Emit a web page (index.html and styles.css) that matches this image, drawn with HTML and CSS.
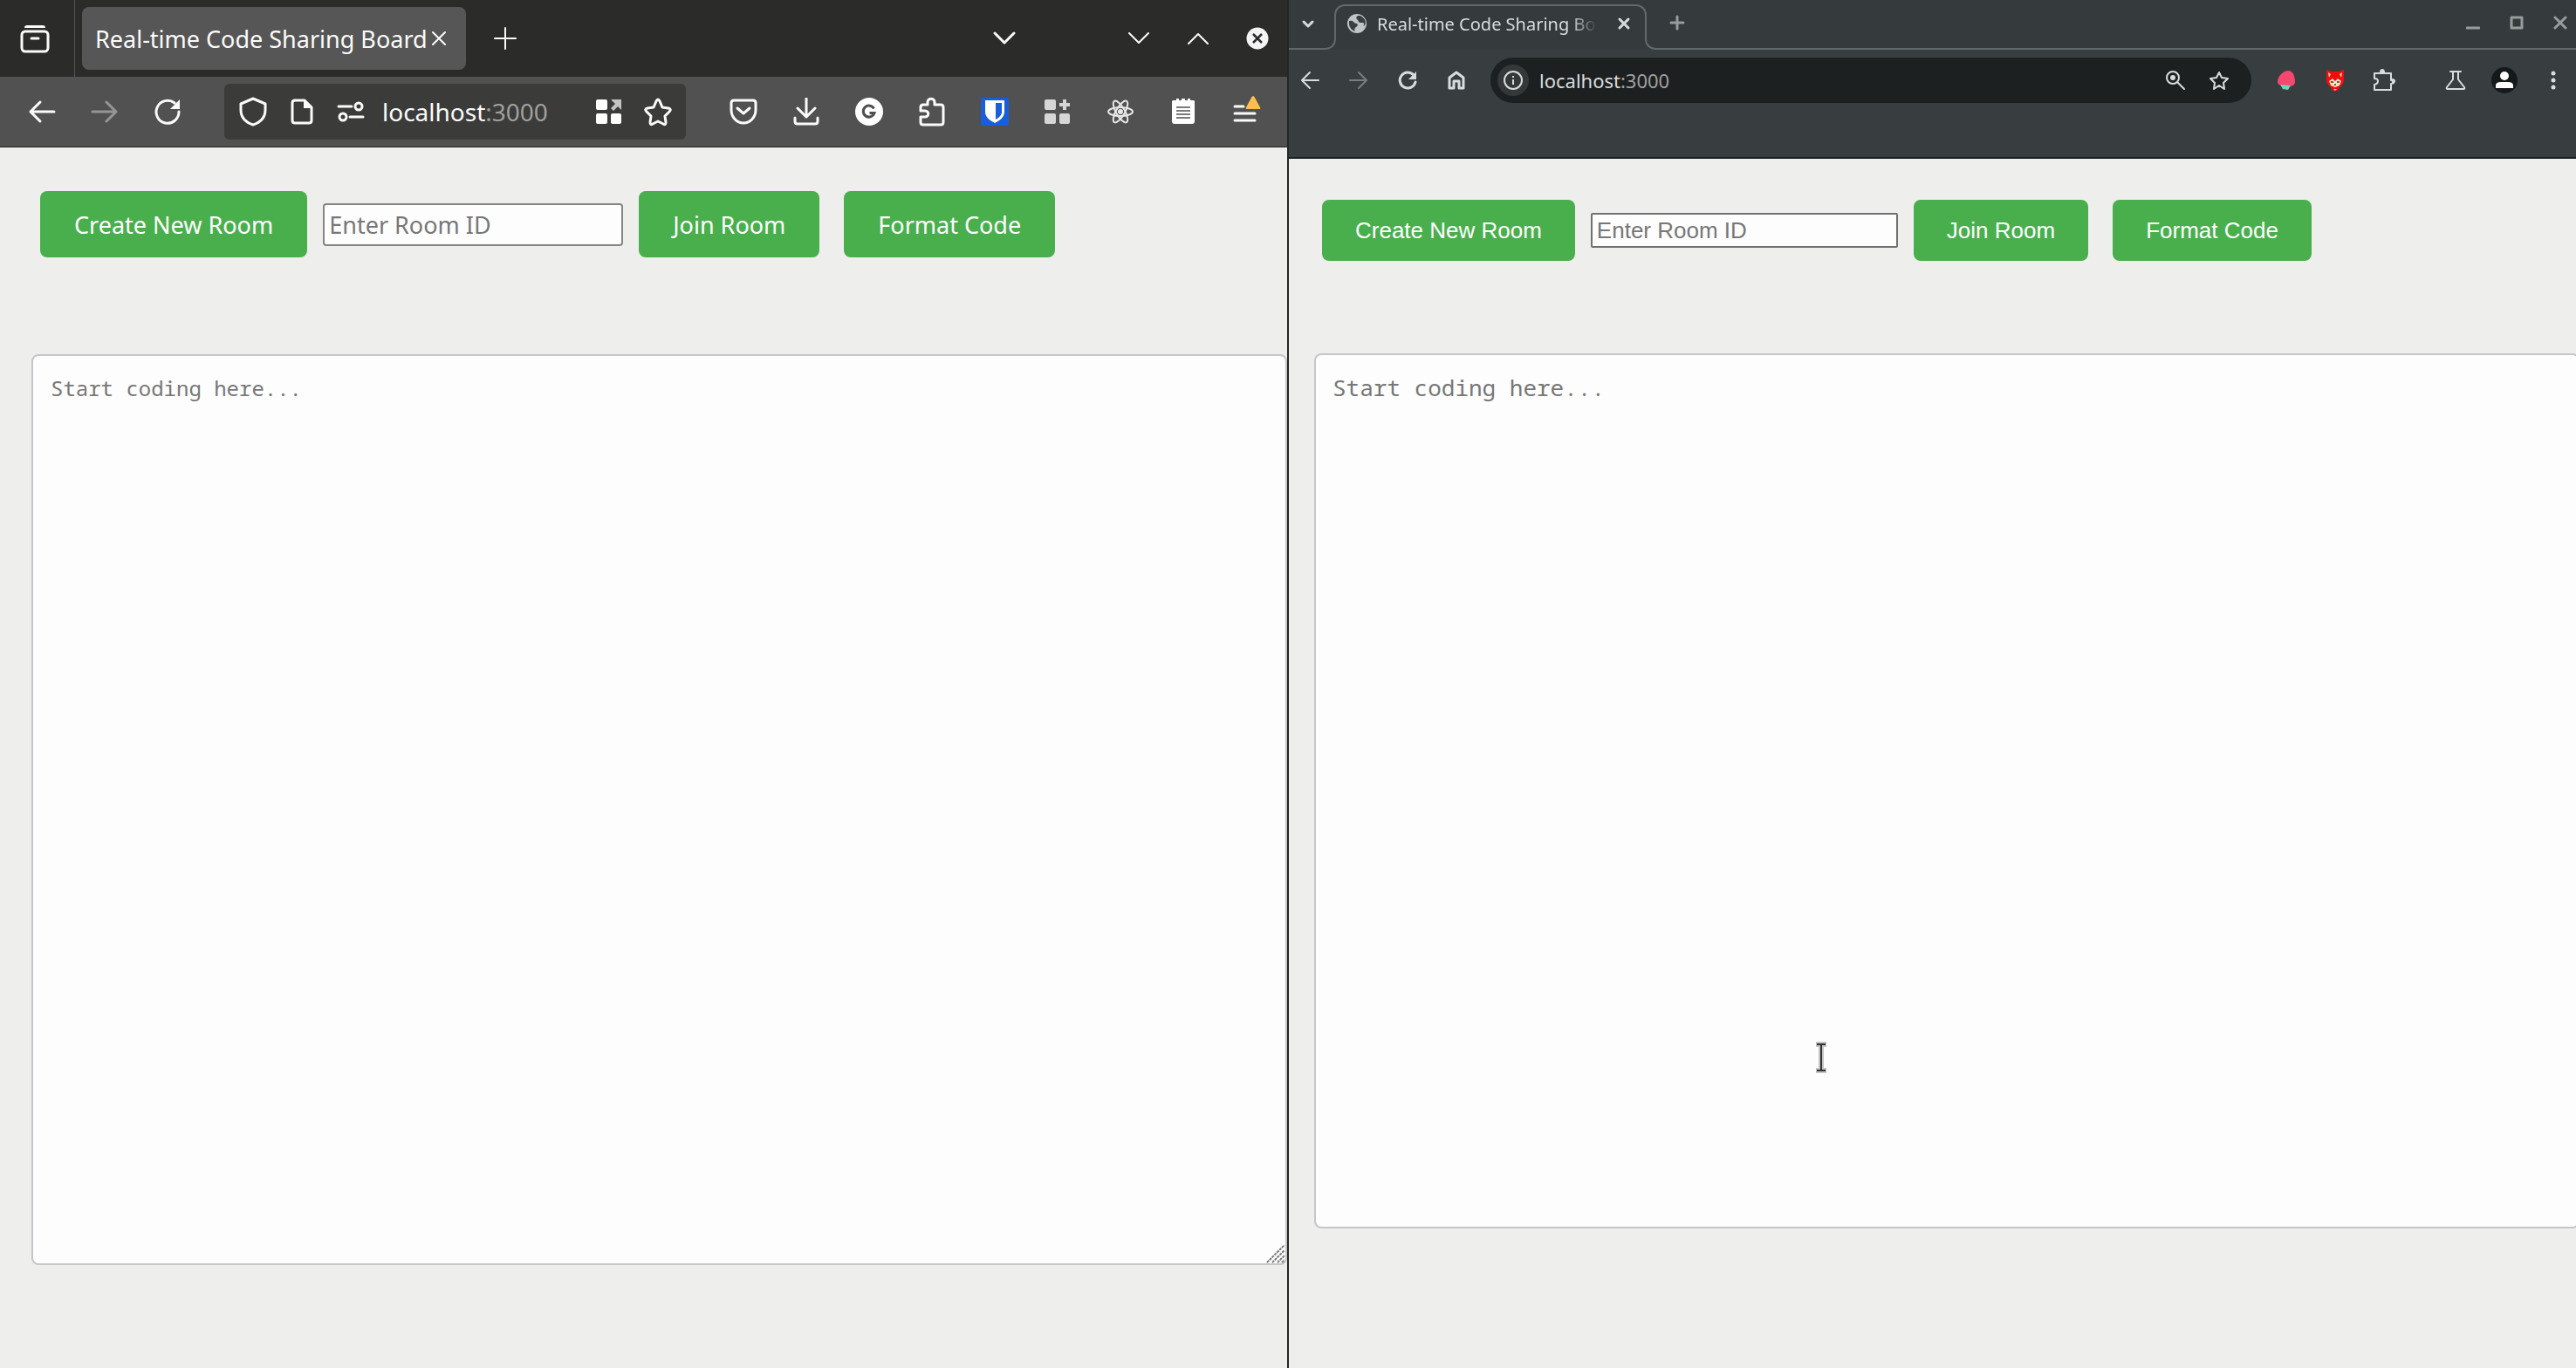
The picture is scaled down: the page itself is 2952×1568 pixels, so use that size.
FILE: index.html
```html
<!DOCTYPE html>
<html lang="en">
<head>
<meta charset="utf-8">
<title>Real-time Code Sharing Board</title>
<link rel="stylesheet" href="styles.css">
</head>
<body>
<main class="desktop">
  <section class="window fox" aria-label="First browser">
    <div class="fox-tabs">
      <button class="fox-view" aria-label="Recent browsing"><svg width="34" height="34" viewBox="0 0 34 34"><rect x="2" y="9" width="30" height="23" rx="4" class="line w3"/><path d="M5 5q0-3 3-3h18q3 0 3 3z" fill="currentColor"/><path d="M13 17h8" class="line w3"/></svg></button>
      <div class="fox-tab"><span>Real-time Code Sharing Board</span><button aria-label="Close tab"><svg width="18" height="18" viewBox="0 0 18 18"><path d="M2 2l14 14M16 2L2 16" class="line w2"/></svg></button></div>
      <button class="fox-new" aria-label="New tab"><svg width="26" height="26" viewBox="0 0 26 26"><path d="M13 1v24M1 13h24" class="line w2"/></svg></button>
      <div class="fox-frame">
        <button class="fox-list" aria-label="List all tabs"><svg width="26" height="16" viewBox="0 0 26 16"><path d="M2 2l11 11L24 2" class="line w3"/></svg></button>
        <button aria-label="Minimize"><svg width="26" height="16" viewBox="0 0 26 16"><path d="M2 2l11 11L24 2" class="line w2"/></svg></button>
        <button aria-label="Maximize"><svg width="26" height="16" viewBox="0 0 26 16"><path d="M2 14L13 3l11 11" class="line w2"/></svg></button>
        <button aria-label="Close window"><svg width="26" height="26" viewBox="0 0 26 26"><circle cx="13" cy="13" r="12.500" fill="#f4f4f4"/><path d="M8 8l10 10M18 8L8 18" stroke="#2b2b2b" stroke-width="2.500"/></svg></button>
      </div>
    </div>
    <div class="fox-bar">
      <button aria-label="Back"><svg width="32" height="32" viewBox="0 0 32 32"><path d="M30 16H3M14 5L3 16l11 11" class="line w3"/></svg></button>
      <button class="dim" aria-label="Forward"><svg width="32" height="32" viewBox="0 0 32 32"><path d="M2 16h27M18 5l11 11-11 11" class="line w3"/></svg></button>
      <button aria-label="Reload"><svg width="32" height="32" viewBox="0 0 32 32"><path d="M29 16a13 13 0 1 1-5-10" class="line w3"/><path d="M30 2v11H19z" fill="currentColor"/></svg></button>
      <div class="fox-url">
        <button aria-label="Tracking protection"><svg width="32" height="34" viewBox="0 0 32 34"><path d="M16 2l14 6v7c0 8-5 14-14 17C7 29 2 23 2 15V8z" class="line w3"/></svg></button>
        <button aria-label="Site information"><svg width="28" height="32" viewBox="0 0 28 32"><path d="M6 3h11l8 8v15q0 3-3 3H6q-3 0-3-3V6q0-3 3-3z" class="line w3"/><path d="M16 2l10 10H16z" fill="currentColor"/></svg></button>
        <button aria-label="Permissions"><svg width="32" height="24" viewBox="0 0 32 24"><path d="M2 6h15M15 18h15" class="line w3"/><circle cx="25" cy="6" r="4" class="line w3"/><circle cx="7" cy="18" r="4" class="line w3"/></svg></button>
        <div class="address" role="textbox" aria-label="Address">localhost<span>:3000</span></div>
        <button aria-label="Open in app"><svg width="30" height="30" viewBox="0 0 30 30" fill="#fff"><rect x="0" y="1" width="13" height="12" rx="2"/><rect x="0" y="17" width="13" height="12" rx="2"/><rect x="17" y="17" width="12" height="12" rx="2"/><path d="M17 1h12v12l-4-4-5 5-3-3 5-5z" opacity=".7"/></svg></button>
        <button aria-label="Bookmark"><svg width="34" height="34" viewBox="0 0 34 34"><path d="M17 3q1 0 2 2l3 7 7 1q4 1 1 4l-5 5 1 7q0 4-3 2l-6-3-6 3q-3 2-3-2l1-7-5-5q-3-3 1-4l7-1 3-7q1-2 2-2z" class="line w3"/></svg></button>
      </div>
      <button aria-label="Pocket"><svg width="32" height="30" viewBox="0 0 32 30"><path d="M5 2h22q3 0 3 3v8c0 8-6 15-14 15S2 21 2 13V5q0-3 3-3z" class="line w3"/><path d="M9 11l7 6 7-6" class="line w3"/></svg></button>
      <button aria-label="Downloads"><svg width="30" height="32" viewBox="0 0 30 32"><path d="M15 1v21M5 12l10 10 10-10M2 23v4q0 3 3 3h20q3 0 3-3v-4" class="line w3"/></svg></button>
      <button aria-label="Grammar extension"><svg width="34" height="34" viewBox="0 0 34 34"><circle cx="17" cy="17" r="16" fill="#fff"/><path d="M22.500 13.500A6.500 6.500 0 1 0 23 18.500h-5.500" fill="none" stroke="#4f4f4f" stroke-width="3"/></svg></button>
      <button aria-label="Extensions"><svg width="32" height="34" viewBox="0 0 32 34"><path d="M3 12q0-3 3-3h5V6c0-5 8-5 8 0v3h7q3 0 3 3v17q0 3-3 3H6q-3 0-3-3v-6h5c5 0 5-7 0-7H3z" class="line w3"/></svg></button>
      <button aria-label="Password manager"><svg width="32" height="32" viewBox="0 0 32 32"><rect width="32" height="32" rx="2" fill="#175ddc"/><path d="M5 3h22v13c0 6-5 10-11 13C10 26 5 22 5 16z" fill="#fff"/><path d="M17 6h7v10c0 4-3 7-7 9z" fill="#175ddc"/></svg></button>
      <button aria-label="Add-ons"><svg width="30" height="30" viewBox="0 0 30 30" fill="#d6d6d6"><rect x="0" y="1" width="13" height="12" rx="2"/><rect x="0" y="17" width="13" height="12" rx="2"/><rect x="17" y="17" width="12" height="12" rx="2"/><path d="M21 1h4v4h4v4h-4v4h-4V9h-4V5h4z"/></svg></button>
      <button aria-label="React tools"><svg width="32" height="30" viewBox="0 0 32 30" fill="none" stroke="#e8e8e8" stroke-width="2"><ellipse cx="16" cy="15" rx="14" ry="5"/><ellipse cx="16" cy="15" rx="14" ry="5" transform="rotate(60 16 15)"/><ellipse cx="16" cy="15" rx="14" ry="5" transform="rotate(120 16 15)"/><circle cx="16" cy="15" r="2" fill="#e8e8e8"/></svg></button>
      <button aria-label="Notes"><svg width="26" height="30" viewBox="0 0 26 30"><path d="M0 3q0-1 2-1h3V0h3v2h3V0h4v2h3V0h3v2h3q2 0 2 1v23q0 3-3 3H3q-3 0-3-3z" fill="#fff"/><path d="M5 10h16M5 14h16M5 18h16M5 22h16" stroke="#4f4f4f" stroke-width="1.500"/></svg></button>
      <button aria-label="Menu"><svg width="34" height="38" viewBox="0 0 34 38"><path d="M4 13h10M4 21h23M4 29h23" class="line w3"/><path d="M25 1q1 0 2 2l6 11q1 2-1 2H18q-2 0-1-2l6-11q1-2 2-2z" fill="#ffbd4f"/></svg></button>
    </div>
    <div class="page">
      <div class="controls">
        <button class="action">Create New Room</button>
        <input class="room" type="text" placeholder="Enter Room ID" aria-label="Room ID">
        <button class="action">Join Room</button>
        <button class="action format">Format Code</button>
      </div>
      <div class="board">
        <textarea class="editor" placeholder="Start coding here..." aria-label="Code"></textarea>
        <svg class="grip" width="22" height="22" viewBox="0 0 22 22"><path d="M1 21L21 1M7 21L21 7M13 21l8-8M18 21l3-3" stroke="#777" stroke-width="2" stroke-dasharray="3 1"/></svg>
      </div>
    </div>
  </section>

  <div class="divider"></div>

  <section class="window chrome" aria-label="Second browser">
    <div class="cr-tabs">
      <button class="cr-search" aria-label="Search tabs"><svg width="16" height="12" viewBox="0 0 16 12"><path d="M3 3l5 5 5-5" class="line w3"/></svg></button>
      <div class="cr-tabwrap">
        <div class="cr-tab">
          <svg width="24" height="24" viewBox="0 0 24 24"><circle cx="12" cy="12" r="11" fill="#c0c5c5"/><path d="M3 9q4-1 5 1t4 2q2 2-1 4t-1 5q-6-2-7-8zM13 3q-3 2-1 4t2 3 4 1 1 4q2 0 3-3 0-6-6-9z" fill="#3a4041"/></svg>
          <span class="cr-title">Real-time Code Sharing Board</span>
          <button aria-label="Close tab"><svg width="16" height="16" viewBox="0 0 16 16"><path d="M3 3l10 10M13 3L3 13" class="line w3"/></svg></button>
        </div>
      </div>
      <div class="cr-strip">
        <button class="cr-new" aria-label="New tab"><svg width="18" height="18" viewBox="0 0 18 18"><path d="M9 2v14M2 9h14" class="line w3"/></svg></button>
        <div class="cr-frame">
          <button aria-label="Minimize"><svg width="16" height="18" viewBox="0 0 16 18"><path d="M1 15h14" class="line w3"/></svg></button>
          <button aria-label="Maximize"><svg width="16" height="18" viewBox="0 0 16 18"><path d="M2 3h12v12H2z" class="line w3"/></svg></button>
          <button aria-label="Close window"><svg width="16" height="16" viewBox="0 0 16 16"><path d="M2 2l12 12M14 2L2 14" class="line w3"/></svg></button>
        </div>
      </div>
    </div>
    <div class="cr-bar">
      <button aria-label="Back"><svg width="22" height="22" viewBox="0 0 22 22"><path d="M21 11H3M11 2l-9 9 9 9" class="line w2"/></svg></button>
      <button class="dim" aria-label="Forward"><svg width="22" height="22" viewBox="0 0 22 22"><path d="M1 11h18M11 2l9 9-9 9" class="line w2"/></svg></button>
      <button aria-label="Reload"><svg width="22" height="22" viewBox="0 0 22 22"><path d="M20 13a9 9 0 1 1-2-8" class="line w3"/><path d="M21 1v9h-9z" fill="currentColor"/></svg></button>
      <button aria-label="Home"><svg width="20" height="22" viewBox="0 0 20 22"><path d="M2 8l8-6 8 6v12h-5v-8H7v8H2z" class="line w3"/></svg></button>
      <div class="cr-url">
        <button class="cr-info" aria-label="Site information"><svg width="24" height="24" viewBox="0 0 24 24"><circle cx="12" cy="12" r="10" class="line w2"/><path d="M11 11h2v6h-2zM11 7h2v2h-2z" fill="currentColor"/></svg></button>
        <div class="address" role="textbox" aria-label="Address">localhost<span>:3000</span></div>
        <button aria-label="Zoom"><svg width="24" height="24" viewBox="0 0 24 24"><circle cx="9" cy="9" r="7" class="line w2"/><path d="M14 14l8 8" class="line w2"/><circle cx="9" cy="9" r="3" fill="currentColor"/></svg></button>
        <button aria-label="Bookmark"><svg width="24" height="24" viewBox="0 0 24 24"><path d="M12 3l3 6 7 1-5 5 1 7-6-4-6 4 1-7-5-5 7-1z" class="line w2"/></svg></button>
      </div>
      <button aria-label="Strawberry extension"><svg width="20" height="24" viewBox="0 0 20 24"><path d="M12 1c6 0 8 7 8 13 0 4-4 5-8 5-6 0-12-1-12-5C0 8 5 2 12 1z" fill="#f6476f"/><path d="M3 17l12 1-3 5-6-1z" fill="#6bd6b6"/></svg></button>
      <button aria-label="Fox extension"><svg width="22" height="26" viewBox="0 0 22 26"><path d="M1 1l6 2h8l6-2v12c0 4-3 6-5 8l-2 4H8l-2-4c-2-2-5-4-5-8z" fill="#f20d0d"/><path d="M3 4l3 2-2 4zM19 4l-3 2 2 4z" fill="#fbd9b0"/><path d="M4 14l4-3 3 3 3-3 4 3-2 5-5 2-5-2z" fill="#fbe3c0"/><path d="M6 15h3M13 15h3M10 18h2" stroke="#712" stroke-width="1.500"/><path d="M9 23h4l-2 2z" fill="#fbd"/></svg></button>
      <button class="cr-ext" aria-label="Extensions"><svg width="26" height="26" viewBox="0 0 26 26"><path d="M2 5h19v8c4 0 4 4 0 4v7H2v-6q4-1 4-4t-4-3z" class="line w2"/><path d="M8 4q0-4 3-4t3 4zM22 11q4 0 4 3t-4 3z" fill="currentColor"/></svg></button>
      <button aria-label="Labs"><svg width="24" height="24" viewBox="0 0 24 24"><path d="M6 2h12M9 2v9l-7 9q-1 2 1 2h18q2 0 1-2l-7-9V2" class="line w2"/></svg></button>
      <button aria-label="Profile"><svg width="32" height="32" viewBox="0 0 32 32"><circle cx="16" cy="16" r="15" fill="#15191b"/><circle cx="16" cy="11" r="5" fill="#fff"/><path d="M6 25v-3q0-4 6-4h8q6 0 6 4v3z" fill="#fff"/></svg></button>
      <button aria-label="Menu"><svg width="6" height="22" viewBox="0 0 6 22" fill="currentColor"><circle cx="3" cy="3" r="2.500"/><circle cx="3" cy="11" r="2.500"/><circle cx="3" cy="19" r="2.500"/></svg></button>
    </div>
    <div class="page">
      <div class="controls">
        <button class="action">Create New Room</button>
        <input class="room" type="text" placeholder="Enter Room ID" aria-label="Room ID">
        <button class="action">Join Room</button>
        <button class="action format">Format Code</button>
      </div>
      <div class="board">
        <textarea class="editor" placeholder="Start coding here..." aria-label="Code"></textarea>
        <svg class="pointer" width="16" height="38" viewBox="0 0 16 38"><path d="M2 4h12M8 4v30M2 34h12" stroke="#c4c4c4" stroke-width="6" fill="none"/><path d="M3 4h10M8 4v30M3 34h10" stroke="#333" stroke-width="2" fill="none"/></svg>
      </div>
    </div>
  </section>
</main>
</body>
</html>
```
FILE: styles.css
```css
* { box-sizing: border-box; }

body {
  margin: 0;
  background: #eeeeed;
  font-family: "Noto Sans", sans-serif;
}

button {
  display: flex;
  align-items: center;
  justify-content: center;
  flex: none;
  margin: 0;
  padding: 0;
  border: 0;
  background: none;
  color: inherit;
  font: inherit;
}

svg { display: block; flex: none; }

.line {
  fill: none;
  stroke: currentColor;
  stroke-linecap: round;
  stroke-linejoin: round;
}
.w2 { stroke-width: 2px; }
.w3 { stroke-width: 3px; }

.desktop {
  display: grid;
  grid-template-columns: minmax(0, 1fr) 2px minmax(0, 1fr);
  min-height: 100vh;
}
.divider { background: #252525; }
.window { overflow: hidden; }

/* Left browser */
.fox { color: #fbfbfb; }

.fox-tabs {
  display: flex;
  align-items: center;
  height: 88px;
  background: #2b2b29;
}
.fox-view {
  width: 86px;
  height: 88px;
  padding-right: 5px;
  border-right: 1px solid #55554a;
}
.fox-tab {
  display: flex;
  align-items: center;
  justify-content: space-between;
  width: 440px;
  height: 72px;
  margin-left: 8px;
  padding: 0 22px 0 15px;
  border-radius: 8px;
  background: #565656;
  font-size: 27px;
  white-space: nowrap;
}
.fox-new { width: 90px; height: 88px; }
.fox-frame { display: flex; margin-left: auto; }
.fox-frame button { width: 68px; height: 88px; }
.fox-frame .fox-list { margin-right: 86px; }

.fox-bar {
  display: flex;
  align-items: center;
  height: 81px;
  padding: 0 11px 0 12px;
  border-bottom: 1px solid #222;
  background: #515151;
}
.fox-bar > button { width: 72px; height: 80px; }
.dim { opacity: .4; }
.fox-url {
  display: flex;
  align-items: center;
  flex: 1;
  height: 64px;
  margin: 0 30px 0 29px;
  padding: 0 4px 0 5px;
  border-radius: 6px;
  background: #3b3b39;
}
.fox-url button { width: 56px; height: 64px; }

.address { flex: 1; white-space: nowrap; }
.address span { color: #a0a09e; }
.fox .address { padding-left: 8px; font-size: 28px; }

/* Right browser */
.chrome { color: #d8dcdc; }

.cr-tabs {
  display: flex;
  align-items: flex-end;
  height: 57px;
  background: #353b3c;
}
.cr-search {
  width: 38px;
  height: 57px;
  padding-left: 6px;
  border-bottom: 2px solid #62696b;
}
.cr-tabwrap { display: flex; align-items: flex-end; }
.cr-tabwrap::before,
.cr-tabwrap::after {
  content: "";
  width: 14px;
  height: 12px;
  border-bottom: 2px solid #62696b;
}
.cr-tabwrap::before {
  margin-right: -2px;
  border-right: 2px solid #62696b;
  border-bottom-right-radius: 12px;
}
.cr-tabwrap::after {
  margin-left: -2px;
  border-left: 2px solid #62696b;
  border-bottom-left-radius: 12px;
}
.cr-tab {
  display: flex;
  align-items: center;
  width: 358px;
  height: 40px;
  margin-bottom: 12px;
  padding: 2px 16px 0 12px;
  border: 2px solid #62696b;
  border-bottom: 0;
  border-radius: 12px 12px 0 0;
}
.cr-title {
  flex: 1;
  margin: 0 23px 0 11px;
  overflow: hidden;
  font-size: 20px;
  white-space: nowrap;
  mask-image: linear-gradient(to right, #000 88%, transparent);
}
.cr-strip {
  display: flex;
  align-items: center;
  justify-content: space-between;
  flex: 1;
  height: 57px;
  padding: 0 10px 3px 0;
  border-bottom: 2px solid #62696b;
}
.cr-new { width: 42px; height: 50px; opacity: .6; }
.cr-frame { display: flex; gap: 34px; opacity: .6; }

.cr-bar {
  display: flex;
  align-items: flex-start;
  gap: 8px;
  height: 125px;
  padding: 9px 2px 0 0;
  border-bottom: 2px solid #1c1f20;
  background: #383e40;
}
.cr-bar > button { width: 48px; height: 52px; }
.cr-bar .cr-ext { margin-right: 26px; }
.cr-url {
  display: flex;
  align-items: center;
  gap: 2px;
  flex: 1;
  height: 52px;
  margin: 0 8px 0 7px;
  padding: 0 13px 0 8px;
  border-radius: 26px;
  background: #1d2021;
}
.cr-url button { width: 48px; height: 52px; }
.cr-url .cr-info {
  width: 36px;
  height: 36px;
  border-radius: 18px;
  background: #343839;
}
.chrome .address { padding-left: 10px; font-size: 22px; }

/* Code board page */
.controls {
  display: flex;
  align-items: center;
  gap: 18px;
}
.action {
  padding: 0 39px;
  border-radius: 8px;
  background: #49af4d;
  color: #fff;
  white-space: nowrap;
}
.format { margin-left: 10px; }
.room {
  border: 2px solid #858585;
  border-radius: 4px;
  background: #fdfdfd;
  font: inherit;
}
.room::placeholder,
.editor::placeholder {
  color: #777;
  opacity: 1;
}
.board { position: relative; }
.editor {
  display: block;
  width: 100%;
  border: 2px solid #c6c6ca;
  border-radius: 8px;
  background: #fdfdfd;
  font-family: "Noto Sans Mono", "DejaVu Sans Mono", monospace;
  line-height: 36px;
  resize: none;
}

.fox .page { padding: 50px 0 40px 36px; font-size: 27px; }
.fox .controls { height: 76px; margin: 0 0 111px 10px; }
.fox .action { height: 76px; }
.fox .room { width: 344px; height: 49px; padding: 0 5px; }
.fox .editor { height: 1044px; padding: 19px 20px; font-size: 24px; }
.grip { position: absolute; right: 2px; bottom: 2px; }

.chrome .page {
  padding: 47px 0 40px 29px;
  font-family: "Liberation Sans", Arial, sans-serif;
  font-size: 26px;
}
.chrome .controls { height: 70px; margin: 0 0 106px 9px; }
.chrome .action { height: 70px; padding: 0 38px; }
.chrome .room {
  width: 352px;
  height: 40px;
  padding: 0 5px;
  border-color: #707070;
  border-radius: 2px;
}
.chrome .editor {
  width: calc(100% + 4px);
  height: 1003px;
  padding: 19px;
  font-size: 26px;
}
.pointer { position: absolute; left: 573px; top: 788px; }
```
